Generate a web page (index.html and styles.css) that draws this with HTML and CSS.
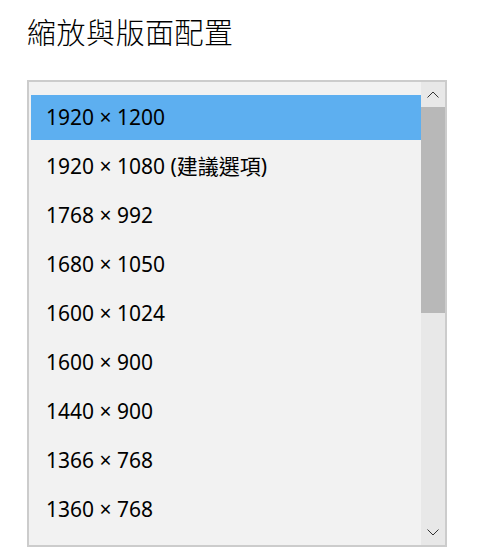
FILE: index.html
```html
<!DOCTYPE html>
<html lang="zh-Hant">
<head>
<meta charset="utf-8">
<link rel="stylesheet" href="styles.css">
</head>
<body>
<div class="page">
  <h1 class="title">縮放與版面配置</h1>
  <div class="listbox">
    <ul class="list">
      <li class="item selected">1920 × 1200</li>
      <li class="item">1920 × 1080 (建議選項)</li>
      <li class="item">1768 × 992</li>
      <li class="item">1680 × 1050</li>
      <li class="item">1600 × 1024</li>
      <li class="item">1600 × 900</li>
      <li class="item">1440 × 900</li>
      <li class="item">1366 × 768</li>
      <li class="item">1360 × 768</li>
    </ul>
    <div class="scrollbar">
      <div class="arrow up">
        <svg width="12" height="7" viewBox="0 0 12 7"><path d="M0.5 6.5 L6 1 L11.5 6.5" fill="none" stroke="#333" stroke-width="1"/></svg>
      </div>
      <div class="track">
        <div class="thumb"></div>
      </div>
      <div class="arrow down">
        <svg width="12" height="7" viewBox="0 0 12 7"><path d="M0.5 0.5 L6 6 L11.5 0.5" fill="none" stroke="#333" stroke-width="1"/></svg>
      </div>
    </div>
  </div>
</div>
</body>
</html>
```
FILE: styles.css
```css
html, body {
  margin: 0;
  padding: 0;
  background: #ffffff;
}
.page {
  padding: 12px 0 0 27px;
  font-family: "Noto Sans", "Noto Sans CJK TC", sans-serif;
  color: #000;
}
.title {
  margin: 0;
  font-family: "Noto Sans CJK TC", sans-serif;
  font-weight: 300;
  font-size: 29px;
  line-height: 38px;
  letter-spacing: 0.5px;
  height: 38px;
}
.listbox {
  margin-top: 30px;
  width: 416px;
  height: 463px;
  border: 2px solid #cccccc;
  background: #f2f2f2;
  display: flex;
}
.list {
  list-style: none;
  margin: 0;
  padding: 13px 0 0 2px;
  flex: 1;
  display: flex;
  flex-direction: column;
  gap: 4px;
}
.item {
  height: 45px;
  line-height: 44px;
  padding-left: 15px;
  font-size: 21px;
  font-family: "Noto Sans", "Noto Sans CJK TC", sans-serif;
}
.item.selected {
  background: #5daff0;
}
.scrollbar {
  width: 24px;
  background: #e8e8e8;
  display: flex;
  flex-direction: column;
}
.arrow {
  height: 25px;
  display: flex;
  align-items: center;
  justify-content: center;
}
.track {
  flex: 1;
}
.thumb {
  height: 206px;
  background: #b8b8b8;
}
```
